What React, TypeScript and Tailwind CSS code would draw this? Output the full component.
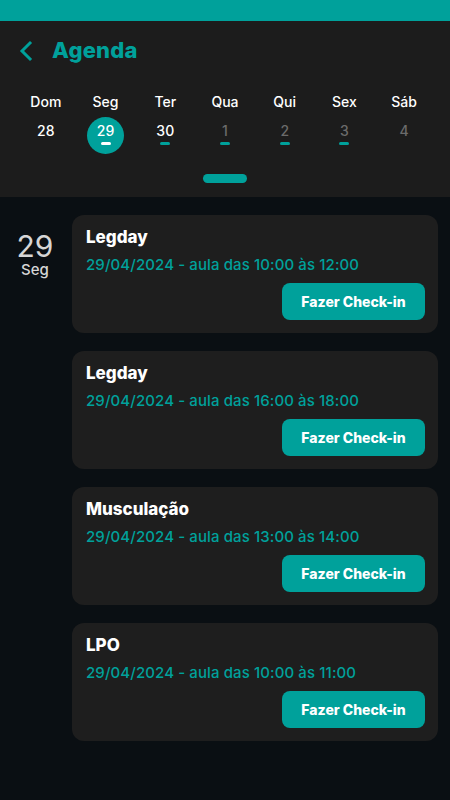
const FONT = { fontFamily: "Inter, 'Noto Sans', sans-serif" };

const days = [
  { name: "Dom", num: "28", dim: false, dot: false },
  { name: "Seg", num: "29", dim: false, dot: true, active: true },
  { name: "Ter", num: "30", dim: false, dot: true },
  { name: "Qua", num: "1", dim: true, dot: true },
  { name: "Qui", num: "2", dim: true, dot: true },
  { name: "Sex", num: "3", dim: true, dot: true },
  { name: "Sáb", num: "4", dim: true, dot: false },
];

const classes = [
  { title: "Legday", time: "29/04/2024 - aula das 10:00 às 12:00" },
  { title: "Legday", time: "29/04/2024 - aula das 16:00 às 18:00" },
  { title: "Musculação", time: "29/04/2024 - aula das 13:00 às 14:00" },
  { title: "LPO", time: "29/04/2024 - aula das 10:00 às 11:00" },
];

export default function App() {
  return (
    <div className="w-[450px] h-[800px] bg-[#0a0f13] flex flex-col overflow-hidden" style={FONT}>
      <div className="h-[21px] bg-[#00a19b]" />

      {/* header */}
      <div className="bg-[#1c1c1c] h-[176px] flex flex-col">
        <div className="flex items-center h-[58px] pt-[1px] pl-[18px]">
          <svg width="16" height="22" viewBox="0 0 16 22" fill="none">
            <path d="M12 3 L4 11 L12 19" stroke="#00a19b" strokeWidth="3" strokeLinecap="square" />
          </svg>
          <span className="ml-[18px] text-[22px] font-extrabold text-[#00a19b] tracking-[0.2px]">Agenda</span>
        </div>

        <div className="grid grid-cols-7 px-4 mt-[14px]">
          {days.map((d) => (
            <div key={d.name} className="flex flex-col items-center">
              <span className="text-[14px] font-medium text-white leading-[18px]">{d.name}</span>
              <div
                className={
                  "mt-[6px] w-[37px] h-[37px] rounded-full flex flex-col items-center pt-[5px] " +
                  (d.active ? "bg-[#00a19b]" : "")
                }
              >
                <span
                  className={
                    "text-[14px] font-medium leading-[18px] " + (d.dim ? "text-[#6b6b6b]" : "text-white")
                  }
                >
                  {d.num}
                </span>
                {d.dot && (
                  <div
                    className={
                      "mt-[2px] w-[10px] h-[3px] rounded-full " + (d.active ? "bg-white" : "bg-[#00a19b]")
                    }
                  />
                )}
              </div>
            </div>
          ))}
        </div>

        <div className="flex justify-center mt-[20px]">
          <div className="w-[44px] h-[9px] rounded-full bg-[#00a19b]" />
        </div>
      </div>

      {/* list */}
      <div className="flex pt-[18px] pr-[12px]">
        <div className="w-[72px] flex flex-col items-center pt-[16px] pr-[2px]">
          <span className="text-[30px] leading-[31px] text-[#d6d6d6]">29</span>
          <span className="text-[15px] font-medium leading-[15px] text-[#d6d6d6]">Seg</span>
        </div>
        <div className="flex-1 flex flex-col gap-[18px]">
          {classes.map((c, i) => (
            <div key={i} className="bg-[#1e1e1e] rounded-[12px] h-[118px] pl-[14px] pr-[13px] pt-[11px] flex flex-col">
              <span className="text-[17px] font-extrabold text-white leading-[22px]">{c.title}</span>
              <span className="mt-[7px] text-[15px] font-medium text-[#00a19b] leading-[20px] tracking-[0.1px]">
                {c.time}
              </span>
              <div className="flex justify-end mt-[8px]">
                <button className="w-[143px] h-[37px] rounded-[8px] bg-[#00a19b] text-white text-[14px] font-extrabold">
                  Fazer Check-in
                </button>
              </div>
            </div>
          ))}
        </div>
      </div>
    </div>
  );
}
